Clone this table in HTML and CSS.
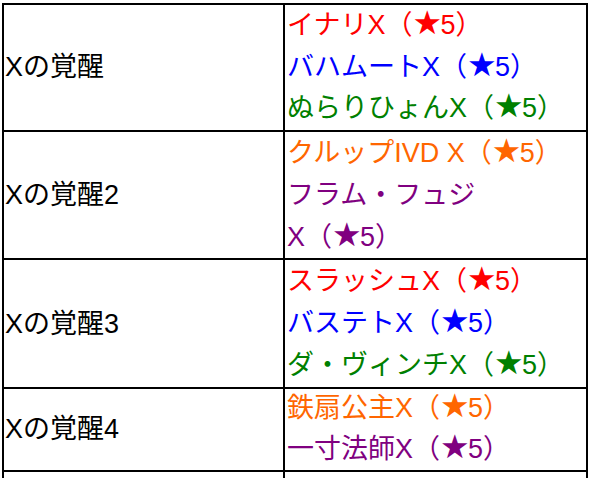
FILE: index.html
```html
<!DOCTYPE html>
<html lang="ja">
<head>
<meta charset="utf-8">
<link rel="stylesheet" href="styles.css">
</head>
<body>
<table class="tbl">
  <tr class="r1">
    <td class="name">Xの覚醒</td>
    <td class="list">
      <div class="red">イナリX（<span class="star">★</span>5）</div>
      <div class="blue">バハムートX（<span class="star">★</span>5）</div>
      <div class="green">ぬらりひょんX（<span class="star">★</span>5）</div>
    </td>
  </tr>
  <tr class="r2">
    <td class="name">Xの覚醒2</td>
    <td class="list">
      <div class="orange">クルップIVD X（<span class="star">★</span>5）</div>
      <div class="purple">フラム・フュジ<br>X（<span class="star">★</span>5）</div>
    </td>
  </tr>
  <tr class="r3">
    <td class="name">Xの覚醒3</td>
    <td class="list">
      <div class="red">スラッシュX（<span class="star">★</span>5）</div>
      <div class="blue">バステトX（<span class="star">★</span>5）</div>
      <div class="green">ダ・ヴィンチX（<span class="star">★</span>5）</div>
    </td>
  </tr>
  <tr class="r4">
    <td class="name">Xの覚醒4</td>
    <td class="list">
      <div class="orange">鉄扇公主X（<span class="star">★</span>5）</div>
      <div class="purple">一寸法師X（<span class="star">★</span>5）</div>
    </td>
  </tr>
  <tr class="r5">
    <td class="name"></td>
    <td class="list"></td>
  </tr>
</table>
</body>
</html>
```

FILE: styles.css
```css
html, body {
  margin: 0;
  padding: 0;
  background: #ffffff;
}
body {
  font-family: "Liberation Sans", "Noto Sans CJK JP", sans-serif;
  font-size: 27px;
  color: #000000;
}
.tbl {
  margin: 3px 0 0 2px;
  border-collapse: separate;
  border-spacing: 0;
  border-top: 2px solid #000;
  border-left: 2px solid #000;
  table-layout: fixed;
}
.tbl td {
  border-right: 2px solid #000;
  border-bottom: 2px solid #000;
  padding: 0 1px;
  line-height: 42px;
}
.name {
  width: 281px;
  box-sizing: border-box;
  vertical-align: middle;
}
.list {
  width: 298px;
  vertical-align: top;
  padding-left: 2px !important;
}
.star {
  display: inline-block;
  width: 28px;
  text-align: center;
  font-family: "DejaVu Sans", sans-serif;
  font-size: 33px;
  line-height: 0;
}
.r1 td { height: 125px; line-height: 41.7px; }
.r2 td { height: 126px; }
.r3 td { height: 127px; }
.r4 td { height: 81px; line-height: 41px; }
.r4 .list div:first-child { margin-top: -1px; }
.r5 td { height: 6px; border-bottom: none !important; }
.red { color: #ff0000; }
.blue { color: #0000ff; }
.green { color: #008000; }
.orange { color: #ff6600; }
.purple { color: #800080; }
```
